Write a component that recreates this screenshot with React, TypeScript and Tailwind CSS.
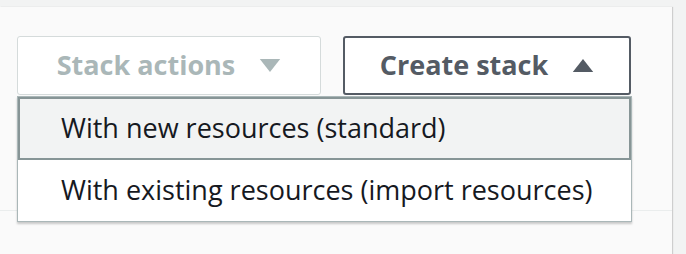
import { useState } from 'react';

// Stack actions / Create stack header with the create menu open
const createOptions = ['With new resources (standard)', 'With existing resources (import resources)'];

function Caret({ up, className }: { up?: boolean; className: string }) {
  return (
    <svg viewBox="0 0 22 14" className={className} fill="currentColor">
      {up ? <polygon points="11,0 22,14 0,14" /> : <polygon points="0,0 22,0 11,14" />}
    </svg>
  );
}

export default function App() {
  const [active, setActive] = useState(0);

  return (
    <div className="h-[254px] w-[686px] bg-[#f2f3f3] pt-[7px] font-['Open_Sans',sans-serif] overflow-hidden">
      <div className="h-[247px] w-[672px] bg-[#fafafa] shadow-[1px_0_1px_rgba(0,0,0,0.15)]">
        <div className="relative h-[204px] border-b border-[#eaeded] pl-[17px] pt-[29px]">
          <div className="flex gap-[22px]">
            <button
              disabled
              className="flex h-[59px] w-[304px] items-center justify-center gap-[24px] rounded-[3px] border border-[#d5dbdb] bg-white text-[27px] font-bold text-[#aab7b8]"
            >
              Stack actions
              <Caret className="h-[13px] w-[22px]" />
            </button>
            <button className="flex h-[59px] w-[288px] items-center justify-center gap-[24px] rounded-[3px] border-2 border-[#545b64] bg-white text-[27px] font-bold text-[#545b64]">
              Create stack
              <Caret up className="h-[13px] w-[22px]" />
            </button>
          </div>

          {/* open menu under Create stack */}
          <div className="absolute left-[17px] top-[89px] w-[615px] border border-[#aab7b8] bg-white shadow-[0_2px_2px_rgba(0,0,0,0.2)]">
            {createOptions.map((label, i) => (
              <div
                key={label}
                onMouseEnter={() => setActive(i)}
                className={
                  i === active
                    ? 'flex h-[63px] items-center border-2 border-[#879596] bg-[#f2f3f3] pl-[41px] text-[27px] text-[#16191f]'
                    : 'flex h-[61px] items-center border-2 border-transparent pl-[41px] text-[27px] text-[#16191f]'
                }
              >
                {label}
              </div>
            ))}
          </div>
        </div>
      </div>
    </div>
  );
}
